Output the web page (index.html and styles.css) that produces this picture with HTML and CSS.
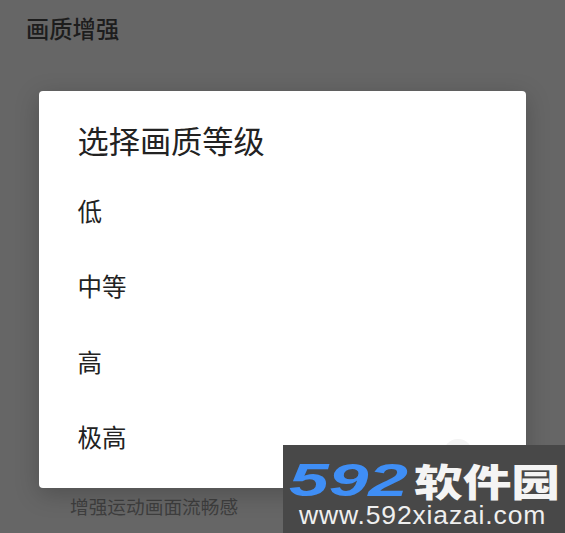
FILE: index.html
```html
<!DOCTYPE html>
<html lang="zh">
<head>
<meta charset="utf-8">
<title>画质增强</title>
<link rel="stylesheet" href="styles.css">
</head>
<body>
<div class="page">
  <h1 class="page-title">画质增强</h1>
  <div class="dialog">
    <h2 class="dialog-title">选择画质等级</h2>
    <ul class="options">
      <li class="option">低</li>
      <li class="option">中等</li>
      <li class="option">高</li>
      <li class="option">极高</li>
    </ul>
    <span class="ghost"></span>
  </div>
  <p class="sub">增强运动画面流畅感</p>
  <div class="mark">
    <div class="mark-top"><span class="mark-num">592</span><span class="mark-name">软件园</span></div>
    <div class="mark-url">www.592xiazai.com</div>
  </div>
</div>
</body>
</html>
```
FILE: styles.css
```css
* { box-sizing: border-box; }
html, body { margin: 0; padding: 0; }
body { width: 565px; height: 533px; overflow: hidden; background: #666666; font-family: "Noto Sans CJK SC", "Noto Sans", sans-serif; }
.page { position: relative; width: 565px; height: 533px; padding: 12px 0 0 26px; overflow: hidden; }
.page-title { margin: 0; font-size: 23.3px; line-height: 33px; font-weight: 500; color: #1d1d1d; }
.dialog { position: relative; width: 487px; height: 397px; margin: 46px 0 0 13px; padding: 28px 0 0 38.5px; background: #ffffff; border-radius: 4px; box-shadow: 0 6px 24px rgba(0,0,0,0.22); overflow: hidden; }
.dialog-title { margin: 0; font-size: 31.2px; line-height: 42px; font-weight: 400; color: #222222; }
.options { list-style: none; margin: 32px 0 0; padding: 0; }
.option { height: 75.3px; font-size: 24.5px; line-height: 36px; color: #222222; }
.ghost { position: absolute; left: 404px; top: 348px; width: 30px; height: 30px; border-radius: 50%; background: #f3f3f3; }
.sub { margin: 6px 0 0 44px; font-size: 18.7px; line-height: 24px; color: #3e3e3e; }
.mark { position: absolute; left: 283px; top: 445px; width: 282px; height: 88px; background: #484848; padding: 16px 0 0 6px; }
.mark-top { display: flex; align-items: center; height: 38px; }
.mark-num { width: 125px; font-family: "Liberation Sans", sans-serif; font-style: italic; font-weight: 700; font-size: 46px; line-height: 38px; color: #3f8ef5; transform: scaleX(1.55); transform-origin: left center; }
.mark-name { font-size: 38px; font-weight: 900; line-height: 38px; white-space: nowrap; color: #f4f4f4; transform: scaleX(1.28); transform-origin: left center; }
.mark-url { margin: 1px 0 0 10px; font-family: "Liberation Sans", sans-serif; font-size: 26.5px; line-height: 30px; white-space: nowrap; color: #efefef; letter-spacing: 0.85px; }
```
